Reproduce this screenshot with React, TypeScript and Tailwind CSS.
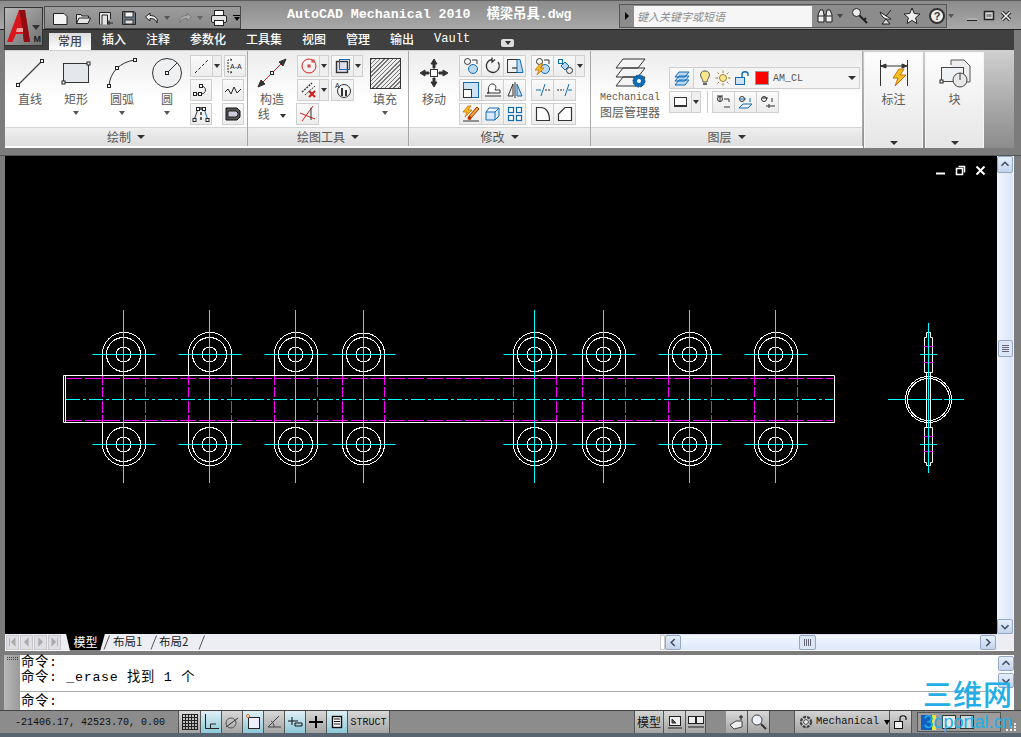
import type { ReactNode } from 'react';

const CJK = "'Noto Sans CJK SC', sans-serif";
const MONO = "'Liberation Mono', 'Noto Sans CJK SC', monospace";

const LUGS = [123.5, 209.5, 295.5, 363.5, 534.5, 603.5, 689.5, 775.5];

function Ic({ s = 20, w, h, children }: { s?: number; w?: number; h?: number; children: ReactNode }) {
  return (
    <svg width={w ?? s} height={h ?? s} viewBox={`0 0 ${w ?? s} ${h ?? s}`} fill="none" stroke="#333" strokeWidth="1" className="block shrink-0">
      {children}
    </svg>
  );
}

const Node = ({ x, y }: { x: number; y: number }) => <rect x={x - 1.5} y={y - 1.5} width="3" height="3" fill="#fff" stroke="#222" />;
const Caret = ({ c = 'border-t-[#333]' }: { c?: string }) => (
  <span className={`block w-0 h-0 border-x-[3px] border-x-transparent border-t-[4px] ${c}`} />
);

function Large({ icon, label, caret, w = 46 }: { icon: ReactNode; label: ReactNode; caret?: boolean; w?: number }) {
  return (
    <div className="flex flex-col items-center shrink-0" style={{ width: w }}>
      <div className="h-[36px] flex items-center justify-center">{icon}</div>
      <div className="text-[12px] leading-[15px] text-[#5a5a5a] text-center whitespace-nowrap">{label}</div>
      {caret && <div className="mt-[5px]"><Caret c="border-t-[#555]" /></div>}
    </div>
  );
}

function Small({ children, w = 23 }: { children?: ReactNode; w?: number }) {
  return (
    <div className="h-[22px] flex items-center justify-center bg-gradient-to-b from-[#fafafa] to-[#ececec] border border-[#cfcfcf] -ml-px first:ml-0 shrink-0" style={{ width: w }}>
      {children}
    </div>
  );
}

const Drop = () => (
  <div className="w-[10px] h-[22px] flex items-center justify-center bg-[#efefef] border border-[#cfcfcf] -ml-px shrink-0"><Caret /></div>
);

function Panel({ title, w, children }: { title: string; w: number; children: ReactNode }) {
  return (
    <div className="flex flex-col border-r border-[#a8a8a8] shrink-0" style={{ width: w }}>
      <div className="h-[77px] flex items-start pt-[4px]">{children}</div>
      <div className="h-[19px] flex items-center justify-center gap-[6px] text-[12px] text-[#555] bg-gradient-to-b from-[#efefef] to-[#dedede] border-t border-[#d4d4d4]">
        {title}
        <span className="block w-0 h-0 border-x-[4px] border-x-transparent border-t-[4px] border-t-[#333]" />
      </div>
    </div>
  );
}

function SidePanel({ label, icon, w }: { label: string; icon: ReactNode; w: number }) {
  return (
    <div className="flex flex-col items-center bg-gradient-to-b from-[#fdfdfd] to-[#e6e6e6] border-x border-t border-[#f6f6f6] mr-[2px] shrink-0" style={{ width: w }}>
      <div className="h-[34px] mt-[3px] flex items-center">{icon}</div>
      <div className="text-[12px] leading-[15px] text-[#5a5a5a] mt-[1px]">{label}</div>
      <div className="mt-auto mb-[3px]"><span className="block w-0 h-0 border-x-[4px] border-x-transparent border-t-[4px] border-t-[#333]" /></div>
    </div>
  );
}

const Blue = '#0f6cb3';

function Bolt({ x = 0, y = 0 }: { x?: number; y?: number }) {
  return <path d={`M${x + 5} ${y}L${x} ${y + 6}H${x + 4}L${x + 2} ${y + 11}L${x + 9} ${y + 4}H${x + 5}L${x + 8} ${y}Z`} fill="#f8c020" stroke="#c87000" strokeWidth="0.8" />;
}

function StatusBtn({ on, w = 21, children }: { on?: boolean; w?: number; children: ReactNode }) {
  return (
    <div className={`h-[22px] flex items-center justify-center border-r border-[#555] shrink-0 ${on ? 'bg-gradient-to-b from-[#dff0f6] to-[#8cc8d8]' : 'bg-gradient-to-b from-[#d8d8d8] to-[#a4a4a4]'}`} style={{ width: w }}>
      {children}
    </div>
  );
}

function TabSlash() {
  return (
    <svg width="8" height="15" viewBox="0 0 8 15" className="block shrink-0 -mx-[2px]">
      <path d="M6.5 0.5L1 14.5" stroke="#555" fill="none" />
    </svg>
  );
}

function ScrollBtn({ dir, w = 16, h = 15 }: { dir: 'up' | 'down' | 'left' | 'right'; w?: number; h?: number }) {
  const d = { up: 'M4 9L8 5L12 9', down: 'M4 6L8 10L12 6', left: 'M10 3.5L6 7.5L10 11.5', right: 'M6 3.5L10 7.5L6 11.5' }[dir];
  return (
    <div className="flex items-center justify-center bg-gradient-to-b from-[#e6eefa] to-[#c4d4ea] border border-[#92a8c4] rounded-[2px] shrink-0" style={{ width: w, height: h }}>
      <svg width="16" height="15" viewBox="0 0 16 15" className="block"><path d={d} fill="none" stroke="#3c4e66" strokeWidth="1.8" /></svg>
    </div>
  );
}

function Lug({ cx }: { cx: number }) {
  const L = cx - 21;
  const R = cx === 363.5 ? cx + 21 : cx + 22;
  const r = (R - L) / 2;
  return (
    <g>
      <g fill="none" stroke="#fff" shapeRendering="crispEdges">
        <path d={`M${L} 375V354A${r} ${r} 0 0 1 ${R} 354V375`} />
        <path d={`M${L} 423V444A${r} ${r} 0 0 0 ${R} 444V423`} />
        <circle cx={cx} cy={354.5} r={17} />
        <circle cx={cx} cy={354.5} r={7.5} />
        <circle cx={cx} cy={444.5} r={17} />
        <circle cx={cx} cy={444.5} r={7.5} />
      </g>
      <g stroke="#ff00ff">
        <path d={`M${L} 376V422`} strokeDasharray="9 2 10 4 12 2 7" />
        <path d={`M${R} 376V422`} strokeDasharray="9 2 10 4 12 2 7" />
      </g>
      <g stroke="#00ffff">
        <path d={`M${cx} 310V483`} />
        <path d={`M${cx - 31} 354.5H${cx + 32}`} strokeDasharray="13 1 36 1 13" />
        <path d={`M${cx - 31} 444.5H${cx + 32}`} strokeDasharray="13 1 36 1 13" />
      </g>
    </g>
  );
}

function Drawing() {
  return (
    <svg viewBox="5 156 992 478" width="992" height="478" className="block bg-black">
      <path d="M63.5 375.5H834.5V422.5H63.5ZM65.5 375.5V422.5" fill="none" stroke="#fff" />
      <path d="M66 399.5H833" stroke="#00ffff" strokeDasharray="14 3 3 3" />
      {LUGS.map(cx => <Lug key={cx} cx={cx} />)}
      <path d="M66 378.5H833M66 420.5H833" stroke="#ff00ff" strokeDasharray="16 3" />
      <g fill="none" stroke="#fff" shapeRendering="crispEdges">
        <circle cx="928.5" cy="399.5" r="23" />
        <circle cx="928.5" cy="399.5" r="21" />
      </g>
      <g fill="none" stroke="#fff">
        <path d="M924.5 372.5V337.5H926.5V332.5H930.5V337.5H932.5V372.5Z" />
        <path d="M924.5 427.5V462.5H926.5V465.5H930.5V462.5H932.5V427.5Z" />
        <path d="M926.5 372V427M930.5 372V427" />
      </g>
      <path d="M924 346.5H933M924 362.5H933M924 436.5H933M924 451.5H933" stroke="#ff00ff" />
      <path d="M928.5 323V473M920 354.5H937M920 444.5H937" stroke="#00ffff" />
      <path d="M888 399.5H964" stroke="#00ffff" strokeDasharray="18 2 22 2 10 2 20" />
    </svg>
  );
}

function Qat() {
  return (
    <div className="ml-[44px] mt-[5px] w-[197px] h-[23px] bg-gradient-to-b from-[#9c9c9c] to-[#8a8a8a] border border-[#4a4a4a] flex items-center pl-[7px] gap-[7px] shrink-0">
      <Ic s={16}><path d="M1.5 3.5H12L15 6.5V14.5H1.5Z" fill="#f4f4f4" stroke="#222" /></Ic>
      <Ic s={16}><path d="M1.5 13.5V4.5H6L7 6H13.5V8M1.5 13.5L4 8H15.5L13 13.5Z" fill="#e4e4e4" stroke="#222" /></Ic>
      <Ic s={16}><path d="M1.5 14.5V2.5H12.5V9M4 14.5V5H9.5V14.5M11 11V15M9 13H15" fill="#e4e4e4" stroke="#222" /></Ic>
      <Ic s={16}><path d="M1.5 1.5H13L14.5 3V14.5H1.5Z" fill="#6a7684" stroke="#222" /><rect x="4" y="2" width="8" height="5" fill="#f4f4f4" /><rect x="4" y="10" width="8" height="4" fill="#ddd" /></Ic>
      <Ic s={16}><path d="M6 3L1.5 7L6 11V8.5C10 8.5 12 9.5 13 13C14.5 8.5 11 5.5 6 5.5Z" fill="#eee" stroke="#222" /></Ic>
      <span className="-ml-[3px]"><Caret c="border-t-[#555]" /></span>
      <Ic s={16}><path d="M10 3L14.5 7L10 11V8.5C6 8.5 4 9.5 3 13C1.5 8.5 5 5.5 10 5.5Z" fill="#aaa" stroke="#777" /></Ic>
      <span className="-ml-[3px]"><Caret c="border-t-[#666]" /></span>
      <Ic s={18}><rect x="4.5" y="1.5" width="9" height="5" fill="#fff" stroke="#222" /><rect x="1.5" y="6.5" width="15" height="7" rx="1.5" fill="#e4e4e4" stroke="#222" /><rect x="4.5" y="11.5" width="9" height="5" fill="#fff" stroke="#222" /></Ic>
      <span className="flex flex-col items-center gap-[1px] -ml-[2px]"><span className="block w-[7px] h-[1px] bg-black" /><Caret c="border-t-black" /></span>
    </div>
  );
}

function SearchBox() {
  return (
    <div className="ml-[45px] mt-[3px] w-[328px] h-[24px] flex border border-[#555] bg-[#8c8c8c] items-center shrink-0">
      <div className="w-[14px] flex justify-center shrink-0"><span className="block w-0 h-0 border-y-[4px] border-y-transparent border-l-[4px] border-l-black" /></div>
      <div className="w-[178px] h-[21px] bg-[#f6f6f6] text-[11px] italic text-[#8c8c8c] pl-[3px] leading-[21px] shrink-0">键入关键字或短语</div>
      <div className="flex items-center pl-[4px] gap-[8px]">
        <Ic s={18}>
          <path d="M2 15V8L4 3H7L8 8V15ZM10 15V8L11 3H14L16 8V15Z" fill="#eee" stroke="#222" />
          <path d="M8 8H10M2 9H8M10 9H16" stroke="#222" />
        </Ic>
        <span className="-ml-[5px]"><Caret c="border-t-[#444]" /></span>
        <Ic s={18}><circle cx="5.5" cy="5.5" r="4" fill="#eee" stroke="#222" /><path d="M8.5 8.5L16 16M13 13L15 11" stroke="#222" strokeWidth="2" /></Ic>
        <Ic s={18}><path d="M3 5C5 11 9 13 14 12Z" fill="#eee" stroke="#222" /><path d="M9 9L14 3M5 17H13L9 12Z" fill="#ddd" stroke="#222" /></Ic>
        <Ic s={18}><path d="M9 1L11.2 6.5L17 7L12.6 10.8L14 16.5L9 13.5L4 16.5L5.4 10.8L1 7L6.8 6.5Z" fill="#eee" stroke="#222" /></Ic>
        <div className="w-[16px] h-[16px] rounded-full bg-[#eee] border-2 border-[#333] text-[11px] font-bold leading-[12px] text-center text-[#333] shrink-0" style={{ fontFamily: "'Liberation Sans', sans-serif" }}>?</div>
        <span className="-ml-[5px]"><Caret c="border-t-[#555]" /></span>
      </div>
    </div>
  );
}

function WinButtons() {
  return (
    <div className="ml-[19px] mt-[9px] flex gap-[5px]">
      <Ic w={12} h={12}><path d="M1 9.5H11" stroke="#222" strokeWidth="3" /><path d="M1 9H11" stroke="#eee" strokeWidth="1.4" /></Ic>
      <Ic w={12} h={12}><rect x="1.5" y="1.5" width="9" height="8" fill="#d8d8d8" stroke="#222" strokeWidth="1.5" /><rect x="3.5" y="4" width="5" height="3" fill="#888" stroke="none" /></Ic>
      <Ic w={12} h={12}><path d="M2 2L10 10M10 2L2 10" stroke="#222" strokeWidth="3.4" /><path d="M2 2L10 10M10 2L2 10" stroke="#eee" strokeWidth="1.6" /></Ic>
    </div>
  );
}

export default function App() {
  return (
    <div className="relative w-[1021px] h-[737px] overflow-hidden flex flex-col bg-[#7c7c7c]" style={{ fontFamily: CJK }}>
      {/* title bar */}
      <div className="h-[30px] flex shrink-0 border-t border-[#5c5c5c] bg-gradient-to-b from-[#8c8c8c] to-[#a8a8a8] border-b border-b-[#222]">
        <Qat />
        <div className="ml-[46px] w-[287px] text-white text-[13.3px] leading-[28px] whitespace-pre font-bold shrink-0" style={{ fontFamily: MONO }}>AutoCAD Mechanical 2010  横梁吊具.dwg</div>
        <SearchBox />
        <WinButtons />
      </div>

      {/* app button sits over the title and tab rows */}
      <div className="absolute left-[4px] top-[7px] w-[39px] h-[39px] border border-[#333] bg-gradient-to-br from-[#b8b8b8] to-[#707070]">
        <svg width="37" height="37" viewBox="0 0 37 37" className="block">
          <path d="M2 34L14 2H20L25 34H19L18 26H11L7.5 34Z" fill="#d8161c" />
          <path d="M14 2H20L25 34H19L16 12Z" fill="#8e0c12" />
          <path d="M12 20H18V24H11Z" fill="#f4a0a0" />
          <path d="M27 17H35L31 22Z" fill="#333" />
        </svg>
        <span className="absolute right-[1px] bottom-[0px] text-[9px] leading-[11px] font-bold text-[#222]" style={{ fontFamily: "'Liberation Sans', sans-serif" }}>M</span>
      </div>

      {/* ribbon tabs */}
      <div className="h-[20px] ml-[4px] w-[1010px] bg-[#404040] flex items-end pl-[45px] shrink-0 text-[12px] font-medium text-white">
        <div className="h-[17px] w-[42px] mr-[11px] bg-gradient-to-b from-[#dcdcdc] to-white text-[#444] text-center leading-[16px]">常用</div>
        {['插入', '注释', '参数化', '工具集', '视图', '管理', '输出'].map(t => (
          <div key={t} className="mr-[20px] h-[20px] leading-[18px]">{t}</div>
        ))}
        <div className="mr-[31px] h-[20px] leading-[18px]" style={{ fontFamily: MONO }}>Vault</div>
        <div className="mb-[3px] w-[13px] h-[8px] rounded-[2px] bg-[#ddd] flex items-center justify-center"><Caret c="border-t-[#333]" /></div>
      </div>

      {/* ribbon */}
      <div className="h-[98px] ml-[5px] w-[1009px] flex pt-[1px] shrink-0 bg-gradient-to-b from-[#d0d0d0] to-[#8c8c8c]">
        <div className="flex bg-gradient-to-b from-[#ececec] via-white to-white h-[97px] border-b-2 border-white">
          <Panel title="绘制" w={243}>
            <div className="w-[2px] shrink-0" />
            <Large label="直线" icon={<Ic s={32}><path d="M4 28L28 4" stroke="#444" strokeWidth="1.2" /><Node x={4} y={28} /><Node x={28} y={4} /></Ic>} />
            <Large label="矩形" caret icon={<Ic s={32}><rect x="3.5" y="6.5" width="25" height="19" fill="#e4e8ec" stroke="#333" /><Node x={3.5} y={25.5} /><Node x={28.5} y={6.5} /></Ic>} />
            <Large label="圆弧" caret icon={<Ic s={32}><path d="M3 29C4 15 14 5 29 3" stroke="#333" /><Node x={3} y={29} /><Node x={11} y={11} /><Node x={29} y={3} /></Ic>} />
            <Large label="圆" caret w={44} icon={<Ic s={32}><circle cx="16" cy="16" r="14.5" fill="#eef0f2" stroke="#333" /><path d="M16 16L26 6" /><Node x={16} y={16} /></Ic>} />
            <div className="flex flex-col gap-[2px] ml-[1px]">
              <div className="flex w-[55px]">
                <Small w={23}><Ic s={18}><path d="M2 16L16 2" strokeDasharray="3 2" stroke="#222" /></Ic></Small><Drop />
                <span className="ml-[2px]"><Small w={22}><Ic s={18}><path d="M6 3H2V15H6M6 3L4 1.5M6 15L4 16.5" strokeDasharray="2 1" /><text x="4" y="12" fontSize="7" fill="#222" stroke="none" style={{ fontFamily: 'Liberation Sans' }}>A-A</text></Ic></Small></span>
              </div>
              <div className="flex gap-[11px]">
                <Small w={22}><Ic s={18}><path d="M3 13H9C15 13 15 5 9 5" stroke="#333" /><Node x={3} y={13} /><Node x={8} y={13} /><Node x={9} y={5} /></Ic></Small>
                <Small w={22}><Ic s={18}><path d="M1 11L4 8L7 13L10 6L13 12L17 8" stroke="#222" /></Ic></Small>
              </div>
              <div className="flex gap-[11px]">
                <Small w={22}><Ic s={18}><path d="M2 15L6 4" stroke="#333" /><path d="M12 4L16 15" stroke={Blue} /><path d="M9 2V16" strokeDasharray="3 2" stroke="#222" strokeWidth="1.4" /><Node x={6} y={4} /><Node x={2.5} y={15} /><Node x={12} y={4} /><Node x={15.5} y={15} /></Ic></Small>
                <Small w={22}><Ic s={18}><path d="M2 3H13L16 6V12L13 15H2Z" fill="#555" stroke="#111" /><path d="M4 6H12L14 8V10L12 12H4Z" fill="#ccd" stroke="#222" /></Ic></Small>
              </div>
            </div>
          </Panel>

          <Panel title="绘图工具" w={161}>
            <div className="ml-[1px]">
              <Large w={46} label={<>构造<br />线 <span className="inline-block align-middle ml-[8px]"><Caret /></span></>} icon={<Ic s={32}><path d="M4 28L28 4" stroke="#d02020" /><path d="M2 30L9 27L5 23ZM30 2L23 5L27 9Z" fill="#333" /><Node x={16} y={16} /></Ic>} />
            </div>
            <div className="flex flex-col gap-[2px] ml-[2px]">
              <div className="flex">
                <Small><Ic s={18}><circle cx="9" cy="9" r="7" stroke="#d02020" /><rect x="8" y="8" width="2" height="2" stroke="#d02020" /><rect x="12" y="3" width="2" height="2" fill="#fff" stroke="#d02020" /></Ic></Small><Drop />
                <span className="ml-[2px]"><Small><Ic s={18}><rect x="2.5" y="4.5" width="11" height="11" fill="#dde" stroke="#333" strokeWidth="1.4" /><rect x="5.5" y="2.5" width="10" height="10" stroke={Blue} /></Ic></Small></span><Drop />
              </div>
              <div className="flex">
                <Small><Ic s={18}><path d="M2 11L12 2" strokeDasharray="2 1" stroke="#333" strokeWidth="1.4" /><path d="M5 14L15 5" strokeDasharray="2 1" stroke="#333" /><path d="M9 10L15 16M15 10L9 16" stroke="#d01818" strokeWidth="2" /></Ic></Small><Drop />
                <span className="ml-[2px]"><Small><Ic s={18}><circle cx="10" cy="10" r="6.5" stroke="#333" /><path d="M8 7V15M12 9V15" stroke="#333" strokeWidth="2" /><text x="1" y="7" fontSize="7" fill="#222" stroke="none" style={{ fontFamily: 'Liberation Sans' }}>A</text></Ic></Small></span>
              </div>
              <Small><Ic s={18}><path d="M1 8L16 14M14 1L3 16" stroke="#d02020" /><path d="M12 3L12 15" stroke="#333" /></Ic></Small>
            </div>
            <div className="ml-[6px]">
              <Large w={32} label="填充" caret icon={<div className="w-[31px] h-[31px] border border-[#333] bg-[repeating-linear-gradient(135deg,#777_0,#777_1px,#eee_1px,#eee_3px)]" />} />
            </div>
          </Panel>

          <Panel title="修改" w={182}>
            <div className="ml-[2px]">
              <Large label="移动" icon={<Ic s={32}><rect x="12.5" y="12.5" width="7" height="7" fill="#fff" stroke="#333" /><path d="M16 2L13 7H15V11H17V7H19ZM16 30L13 25H15V21H17V25H19ZM2 16L7 13V15H11V17H7V19ZM30 16L25 13V15H21V17H25V19Z" fill="#333" /></Ic>} />
            </div>
            <div className="flex flex-col gap-[2px] ml-[2px]">
              {[0, 1, 2].map(r => (
                <div key={r} className="flex">
                  {[0, 1, 2].map(c => (
                    <Small key={c}>
                      <Ic s={18}>
                        {r === 0 && c === 0 && <><circle cx="5.5" cy="4.5" r="3" /><circle cx="11" cy="12" r="4.5" fill="#bcd8f0" stroke={Blue} /><path d="M10 3H15V7" /></>}
                        {r === 0 && c === 1 && <path d="M14 5A6.5 6.5 0 1 1 8 2.5M8 0.5V5L11 2.5" stroke="#333" strokeWidth="1.3" />}
                        {r === 0 && c === 2 && <><rect x="1.5" y="2.5" width="10" height="13" stroke="#333" /><path d="M11 2.5H14L17 15.5H11Z" fill="#bcd8f0" stroke={Blue} /><path d="M6 11H11" stroke="#111" /></>}
                        {r === 1 && c === 0 && <><rect x="1.5" y="1.5" width="15" height="15" fill="#cfe2f4" stroke={Blue} /><rect x="1.5" y="8.5" width="8" height="8" fill="#fff" stroke="#333" /></>}
                        {r === 1 && c === 1 && <><path d="M1 15H17" stroke="#333" /><path d="M3 12H5C3 6 6 3 8 3C11 3 13 5 11 9H16V12Z" fill="#fff" stroke="#333" /></>}
                        {r === 1 && c === 2 && <><path d="M7 3V15H2Z" stroke="#333" /><path d="M9 1V17" stroke="#333" /><path d="M11 3V15H16Z" fill="#bcd8f0" stroke={Blue} /></>}
                        {r === 2 && c === 0 && <><path d="M1 16H17" stroke="#333" /><path d="M7 11L15 2L17 4L9 13Z" fill="#f0a040" stroke="#a04000" /><circle cx="7.5" cy="13" r="2" fill="#c03000" stroke="none" /><Bolt x={1} y={1} /></>}
                        {r === 2 && c === 1 && <><path d="M2 7H11L15 3V11L11 15H2Z" fill="#dbe9f6" stroke={Blue} /><path d="M2 7L5 3H15M11 7V15" stroke={Blue} /></>}
                        {r === 2 && c === 2 && <g stroke={Blue} fill="#fff" strokeWidth="1.2"><rect x="2.5" y="2.5" width="5" height="5" /><rect x="10.5" y="2.5" width="5" height="5" /><rect x="2.5" y="10.5" width="5" height="5" /><rect x="10.5" y="10.5" width="5" height="5" /></g>}
                      </Ic>
                    </Small>
                  ))}
                </div>
              ))}
            </div>
            <div className="flex flex-col gap-[2px] ml-[5px]">
              <div className="flex">
                <Small><Ic s={18}><circle cx="5.5" cy="4.5" r="3" /><circle cx="11" cy="12" r="4.5" fill="#bcd8f0" stroke={Blue} /><path d="M10 3H15V7" /><Bolt x={1} y={7} /></Ic></Small>
                <Small><Ic s={18}><rect x="2.5" y="2.5" width="4" height="4" stroke={Blue} /><path d="M9 5L13 9L9 13L5 9Z" fill="#bcd8f0" stroke={Blue} /><circle cx="13.5" cy="13.5" r="3" /></Ic></Small>
                <Drop />
              </div>
              <div className="flex">
                <Small><Ic s={18}><path d="M2 9H7M7 15L11 3" stroke={Blue} /><path d="M11 9H17" strokeDasharray="2 1" stroke="#333" /></Ic></Small>
                <Small><Ic s={18}><path d="M1 9H8" strokeDasharray="2 1" stroke="#333" /><path d="M9 15L13 3M12 9H16" stroke={Blue} /></Ic></Small>
              </div>
              <div className="flex">
                <Small><Ic s={18}><path d="M2.5 15.5V2.5H6C12 2.5 15.5 7 15.5 15.5Z" fill="#fff" stroke="#333" strokeWidth="1.2" /></Ic></Small>
                <Small><Ic s={18}><path d="M2.5 15.5V9L9 2.5H15.5V15.5Z" fill="#fff" stroke="#333" strokeWidth="1.2" /></Ic></Small>
              </div>
            </div>
          </Panel>

          <Panel title="图层" w={272}>
            <div className="ml-[3px] w-[72px] flex flex-col items-center shrink-0 text-[#5a5a5a]">
              <div className="h-[36px] flex items-center">
                <Ic s={34}><path d="M3 12L10 3H32L25 12ZM3 21L10 12H32L25 21ZM3 30L10 21H32L25 30Z" fill="#f4f4f4" stroke="#333" /><circle cx="26" cy="25" r="6" fill={Blue} stroke="#084a80" strokeDasharray="2 1" /><circle cx="26" cy="25" r="2" fill="#fff" stroke="none" /></Ic>
              </div>
              <div className="text-[10px] leading-[13px] whitespace-nowrap" style={{ fontFamily: MONO }}>Mechanical</div>
              <div className="text-[12px] leading-[15px] whitespace-nowrap">图层管理器</div>
            </div>
            <div className="flex flex-col gap-[2px] ml-[3px] mt-[12px]">
              <div className="flex">
                <Small w={25}><Ic s={18}><path d="M2 8L6 3H16L12 8ZM2 12L6 7H16L12 12ZM2 16L6 11H16L12 16Z" fill="#bcd8f0" stroke={Blue} /></Ic></Small>
                <div className="w-[167px] h-[22px] -ml-px border border-[#cfcfcf] bg-[#f4f4f4] flex items-center gap-[2px] pl-[3px]">
                  <Ic s={16}><path d="M8 1C4 1 3 4 4 7C5 9 6 10 6 12H10C10 10 11 9 12 7C13 4 12 1 8 1Z" fill="#fbe88c" stroke="#555" /><rect x="6" y="13" width="4" height="2" fill="#666" stroke="none" /></Ic>
                  <Ic s={16}><circle cx="8" cy="8" r="3.5" fill="#fbe88c" stroke="#a08030" /><path d="M8 0.5V3M8 13V15.5M0.5 8H3M13 8H15.5M2.5 2.5L4 4M12 12L13.5 13.5M2.5 13.5L4 12M12 4L13.5 2.5" stroke="#a08030" /></Ic>
                  <span className="ml-[1px]"><Ic s={16}><rect x="1.5" y="7.5" width="9" height="7" fill="#cfe2f4" stroke={Blue} /><path d="M8 7V4C8 1 14 1 14 4V6" stroke={Blue} strokeWidth="1.4" /></Ic></span>
                  <div className="w-[14px] h-[14px] ml-[3px] bg-[#ff0000] border border-[#999]" />
                  <span className="text-[10px] text-[#555] ml-[2px]" style={{ fontFamily: MONO }}>AM_CL</span>
                  <span className="ml-auto mr-[3px] block w-0 h-0 border-x-[4px] border-x-transparent border-t-[4px] border-t-[#333]" />
                </div>
              </div>
              <div className="flex items-center">
                <Small><div className="w-[13px] h-[10px] bg-white border border-[#333] border-b-2" /></Small><Drop />
                <div className="w-px h-[22px] bg-[#ccc] ml-[6px] mr-[5px]" />
                {['M2 3H8M5 3V9M9 6H14V9M9 14H15', 'M3 6H9M13 5V9M2 15L6 11H15L11 15Z', 'M3 5H9M13 5V9M7 13H16M10 11V15'].map(p => (
                  <Small key={p}><Ic s={18}><circle cx="5" cy="6" r="2.5" /><path d={p} stroke={p.includes('Z') ? Blue : '#333'} /></Ic></Small>
                ))}
              </div>
            </div>
          </Panel>
        </div>
        <div className="w-[1px] shrink-0" />
        <div className="flex h-[96px] mt-[1px]">
          <SidePanel w={59} label="标注" icon={<Ic w={32} h={28}><path d="M2.5 1V27M29.5 1V27" stroke="#333" /><path d="M3 7H29" stroke="#333" /><path d="M21 10L15 19H20L17 27L28 16H22L26 10Z" fill="#f8c020" stroke="#d07000" /><path d="M3 7L8 5V9ZM29 7L24 5V9Z" fill="#333" /></Ic>} />
          <SidePanel w={59} label="块" icon={<Ic w={32} h={30}><path d="M12 7V2H25L31 8V24H22" fill="#eee" stroke="#555" /><rect x="2.5" y="9.5" width="22" height="14" fill="#eef2f6" stroke="#444" /><circle cx="21" cy="22" r="7" fill="#e8e8e8" stroke="#444" /><path d="M21 22V15" /><Node x={2.5} y={23.5} /></Ic>} />
        </div>
      </div>

      <div className="h-[8px] shrink-0 border-b border-[#555]" />

      {/* drawing area */}
      <div className="relative ml-[5px] w-[1009px] h-[478px] flex shrink-0">
        <Drawing />
        <div className="absolute top-[9px] left-[930px] flex gap-[9px] items-center">
          <Ic s={11}><path d="M1 8.5H10" stroke="#fff" strokeWidth="2" /></Ic>
          <Ic s={11}><rect x="1.5" y="3.5" width="6" height="6" stroke="#fff" strokeWidth="1.5" /><path d="M3.5 1.5H9.5V7.5" stroke="#fff" strokeWidth="1.5" /></Ic>
          <Ic s={11}><path d="M1.5 1.5L9.5 9.5M9.5 1.5L1.5 9.5" stroke="#fff" strokeWidth="2" /></Ic>
        </div>
        <div className="w-[17px] flex flex-col items-center bg-gradient-to-r from-[#f0f5fd] to-[#dce6f6] border-r border-[#f4f4f4]">
          <ScrollBtn dir="up" w={16} h={17} />
          <div className="mt-[167px]">
            <div className="w-[15px] h-[17px] rounded-[2px] border border-[#92a8c4] bg-[#dce6f4] flex flex-col items-center justify-center gap-[1px]">
              <span className="block w-[7px] h-px bg-[#667]" /><span className="block w-[7px] h-px bg-[#667]" /><span className="block w-[7px] h-px bg-[#667]" /><span className="block w-[7px] h-px bg-[#667]" />
            </div>
          </div>
          <div className="mt-auto"><ScrollBtn dir="down" w={16} h={15} /></div>
        </div>
      </div>

      {/* layout tabs + horizontal scroll */}
      <div className="ml-[5px] w-[1009px] h-[17px] flex items-center bg-[#eceef4] border-b border-white shrink-0">
        <div className="w-[57px] ml-[1px] flex h-[15px] gap-px">
          {['M3 2V12M10 2L5 7L10 12', 'M9 2L4 7L9 12', 'M4 2L9 7L4 12', 'M10 2V12M3 2L8 7L3 12'].map(d => (
            <div key={d} className="w-[13px] h-[15px] bg-[#e0e0e4] border border-[#c8c8cc] flex items-center justify-center">
              <svg width="13" height="14" viewBox="0 0 13 14" className="block"><path d={d} fill="#aaa" stroke="#aaa" /></svg>
            </div>
          ))}
        </div>
        <div className="flex items-center text-[11.5px] text-[#222] ml-[3px] h-[17px]">
          <div className="h-[17px] w-[39px] bg-black text-white text-[12px] text-center leading-[16px] [clip-path:polygon(0_0,100%_0,88%_100%,10%_100%)]">模型</div>
          <TabSlash />
          <div className="w-[43px] pl-[4px]">布局1</div>
          <TabSlash />
          <div className="w-[44px] pl-[3px]">布局2</div>
          <TabSlash />
        </div>
        <div className="ml-auto w-[337px] flex h-[16px] bg-gradient-to-b from-[#f4f8ff] to-[#dce8fa] border-t border-[#dde]">
          <span className="w-[5px] bg-white border border-[#ccc]" />
          <ScrollBtn dir="left" />
          <div className="flex-1 flex justify-center pr-[47px]">
            <div className="w-[17px] h-[15px] rounded-[2px] border border-[#92a8c4] bg-[#dce6f4] flex items-center justify-center gap-[1px]">
              <span className="block w-px h-[7px] bg-[#667]" /><span className="block w-px h-[7px] bg-[#667]" /><span className="block w-px h-[7px] bg-[#667]" /><span className="block w-px h-[7px] bg-[#667]" />
            </div>
          </div>
          <ScrollBtn dir="right" />
          <span className="w-[1px]" />
        </div>
        <div className="w-[17px]" />
      </div>

      <div className="h-[4px] shrink-0" />

      {/* command window */}
      <div className="ml-[4px] w-[1010px] h-[55px] flex shrink-0">
        <div className="w-[16px] bg-gradient-to-r from-[#b8b8b8] to-[#9a9a9a] pt-[2px] flex justify-center">
          <span className="block w-[11px] h-[3px] border-y border-dotted border-[#444]" />
        </div>
        <div className="flex-1 bg-white flex flex-col text-[13.3px] text-black tracking-[0.7px]" style={{ fontFamily: MONO }}>
          <div className="h-[37px] pl-[1px] leading-[15px] border-b border-[#aaa] whitespace-pre">
            <div>命令:</div>
            <div>命令: _erase 找到 1 个</div>
          </div>
          <div className="pl-[1px] pt-[2px] leading-[15px]">命令:</div>
        </div>
        <div className="w-[17px] bg-white flex flex-col items-center gap-[2px] pt-[1px]">
          <ScrollBtn dir="up" />
          <ScrollBtn dir="down" />
        </div>
      </div>

      {/* status bar */}
      <div className="h-[23px] flex items-center shrink-0 bg-[#8c8c8c] border-t border-[#444] pl-[3px] text-[12px] text-[#111]">
        <div className="w-[175px] pl-[12px] whitespace-pre text-[10px]" style={{ fontFamily: MONO }}>-21406.17, 42523.70, 0.00</div>
        <div className="flex h-[22px] border-l border-[#555]">
          <StatusBtn w={22}>
            <div className="w-[16px] h-[16px] bg-[repeating-linear-gradient(0deg,#222_0,#222_1px,transparent_1px,transparent_3px),repeating-linear-gradient(90deg,#222_0,#222_1px,transparent_1px,transparent_3px)]" />
          </StatusBtn>
          <StatusBtn on><Ic s={18}><path d="M3.5 1V15.5H17M8.5 15V11H14" stroke="#222" /></Ic></StatusBtn>
          <StatusBtn><Ic s={16}><circle cx="7" cy="9" r="5" stroke="#555" /><path d="M2 13L14 4" stroke="#333" /></Ic></StatusBtn>
          <StatusBtn on><Ic s={18}><rect x="4.5" y="4.5" width="11" height="11" fill="#eef" stroke="#222" /><circle cx="4" cy="3" r="1.5" fill="#fff" stroke="#e06020" /></Ic></StatusBtn>
          <StatusBtn><Ic s={16}><path d="M13 2L2 13H15M8 13C8 10 7 8 5 7" stroke="#444" /></Ic></StatusBtn>
          <StatusBtn on><Ic s={16}><path d="M1 7H11M5 3V11M8 9H15V12H8Z" stroke="#111" /></Ic></StatusBtn>
          <StatusBtn><Ic s={16}><path d="M1 8H15M8 2V14" stroke="#000" strokeWidth="2" /></Ic></StatusBtn>
          <StatusBtn on><Ic s={14}><rect x="2.5" y="1.5" width="9" height="11" fill="#fff" stroke="#111" strokeWidth="1.4" /><path d="M4 4H10M4 6.5H10M4 9H10" stroke="#111" /></Ic></StatusBtn>
          <StatusBtn w={42}><span style={{ fontFamily: MONO }} className="text-[10px]">STRUCT</span></StatusBtn>
        </div>
        <div className="ml-auto flex h-[22px] items-center">
          <div className="w-[30px] h-[22px] border-x border-[#555] bg-gradient-to-b from-[#d4d4d4] to-[#a4a4a4] text-center leading-[22px]">模型</div>
          <StatusBtn w={22}><Ic s={16}><rect x="2.5" y="2.5" width="11" height="9" fill="#eee" stroke="#222" /><path d="M5 5V9H9Z" fill="#555" /><path d="M1 14H15" stroke="#222" /></Ic></StatusBtn>
          <StatusBtn w={20}><Ic s={18}><rect x="1.5" y="3.5" width="7" height="7" fill="#eee" stroke="#222" /><rect x="9.5" y="3.5" width="7" height="7" fill="#eee" stroke="#222" /><path d="M1 14H17" stroke="#222" /></Ic></StatusBtn>
          <div className="w-[20px]" />
          <StatusBtn w={22}><Ic s={18}><path d="M2 12L8 8L14 8L14 14L6 16Z" fill="#eee" stroke="#444" /><path d="M13 2V7M11 4H15" stroke="#111" /></Ic></StatusBtn>
          <StatusBtn w={22}><Ic s={18}><circle cx="7" cy="7" r="5" fill="#eef4ff" stroke="#444" /><path d="M11 11L16 16" stroke="#333" strokeWidth="2" /></Ic></StatusBtn>
          <div className="w-[24px]" />
          <div className="w-[96px] h-[22px] border-x border-[#555] bg-gradient-to-b from-[#d4d4d4] to-[#a4a4a4] flex items-center pl-[3px] gap-[2px]">
            <Ic s={16}><circle cx="8" cy="8" r="5" fill="#ddd" stroke="#444" strokeWidth="2.4" strokeDasharray="3 1" /><circle cx="8" cy="8" r="2.4" fill="#eee" stroke="#444" /></Ic>
            <span className="text-[10.5px]" style={{ fontFamily: MONO }}>Mechanical</span>
            <span className="ml-[3px] block w-0 h-0 border-x-[3px] border-x-transparent border-t-[5px] border-t-black" />
          </div>
          <StatusBtn w={22}><Ic s={16}><rect x="1.5" y="7.5" width="8" height="7" fill="#eee" stroke="#111" /><path d="M7 7V4C7 1 13 1 13 4V6" stroke="#111" strokeWidth="1.2" /></Ic></StatusBtn>
          <div className="w-[5px]" />
          <div className="w-[84px] h-[20px] border border-[#555] bg-[#9c9c9c] flex items-center pl-[3px] gap-[4px]">
            <div className="w-[11px] h-[15px] bg-[#1060c0]" />
            <div className="w-[4px] h-[15px] -ml-[4px] bg-[#f0e040]" />
            <div className="w-[14px] h-[14px] ml-[2px] bg-[#e8e8e8] border border-[#333]" />
            <div className="w-[14px] h-[14px] bg-[#d0d8e0] border border-[#333]" />
          </div>
          <div className="w-[20px] flex flex-col items-end justify-end h-[22px] pr-[5px] pb-[2px] gap-[1px]">
            <span className="block w-[2px] h-[2px] bg-[#eee]" />
            <span className="block w-[6px] h-[2px] border-x-2 border-[#eee]" />
            <span className="block w-[10px] h-[2px] bg-[repeating-linear-gradient(90deg,#eee_0,#eee_2px,transparent_2px,transparent_4px)]" />
          </div>
        </div>
      </div>
      <div className="flex-1 bg-[#5a6470]" />

      {/* watermark over the bottom right corner */}
      <div className="absolute left-[918px] top-[684px] w-[100px] text-center text-[#22aee6] pointer-events-none" style={{ fontFamily: "'Liberation Sans', 'Noto Sans CJK SC', sans-serif" }}>
        <div className="text-[29px] leading-[25px] tracking-[1px] font-medium">三维网</div>
        <div className="text-[18px] leading-[21px] mt-[3px]">3dportal.cn</div>
      </div>
    </div>
  );
}
